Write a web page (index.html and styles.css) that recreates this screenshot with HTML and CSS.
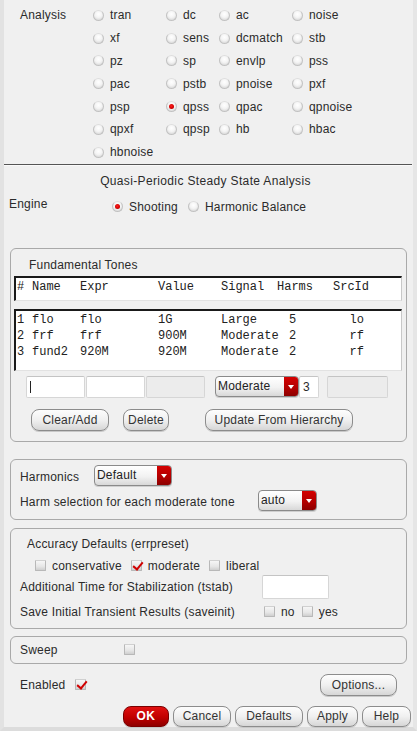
FILE: index.html
```html
<!DOCTYPE html>
<html>
<head>
<meta charset="utf-8">
<link rel="stylesheet" href="styles.css">
</head>
<body>
<div class="win">
  <div class="analysis">
    <div class="alabel">Analysis</div>
    <div class="agrid">
      <span class="opt"><i class="rb"></i>tran</span>
      <span class="opt"><i class="rb"></i>dc</span>
      <span class="opt"><i class="rb"></i>ac</span>
      <span class="opt"><i class="rb"></i>noise</span>
      <span class="opt"><i class="rb"></i>xf</span>
      <span class="opt"><i class="rb"></i>sens</span>
      <span class="opt"><i class="rb"></i>dcmatch</span>
      <span class="opt"><i class="rb"></i>stb</span>
      <span class="opt"><i class="rb"></i>pz</span>
      <span class="opt"><i class="rb"></i>sp</span>
      <span class="opt"><i class="rb"></i>envlp</span>
      <span class="opt"><i class="rb"></i>pss</span>
      <span class="opt"><i class="rb"></i>pac</span>
      <span class="opt"><i class="rb"></i>pstb</span>
      <span class="opt"><i class="rb"></i>pnoise</span>
      <span class="opt"><i class="rb"></i>pxf</span>
      <span class="opt"><i class="rb"></i>psp</span>
      <span class="opt"><i class="rb on"></i>qpss</span>
      <span class="opt"><i class="rb"></i>qpac</span>
      <span class="opt"><i class="rb"></i>qpnoise</span>
      <span class="opt"><i class="rb"></i>qpxf</span>
      <span class="opt"><i class="rb"></i>qpsp</span>
      <span class="opt"><i class="rb"></i>hb</span>
      <span class="opt"><i class="rb"></i>hbac</span>
      <span class="opt"><i class="rb"></i>hbnoise</span>
    </div>
  </div>
  <div class="sep"></div>
  <div class="title">Quasi-Periodic Steady State Analysis</div>
  <div class="engine">
    <span class="elabel">Engine</span>
    <span class="opt"><i class="rb on"></i>Shooting</span>
    <span class="opt"><i class="rb"></i>Harmonic Balance</span>
  </div>

  <div class="group tones">
    <div class="gtitle">Fundamental Tones</div>
    <div class="tbox thead">
      <div class="trow"><span>#</span><span>Name</span><span>Expr</span><span>Value</span><span>Signal</span><span>Harms</span><span>SrcId</span></div>
    </div>
    <div class="tbox tbody">
      <div class="trow"><span>1</span><span>flo</span><span>flo</span><span>1G</span><span>Large</span><span class="h">5</span><span class="s">lo</span></div>
      <div class="trow"><span>2</span><span>frf</span><span>frf</span><span>900M</span><span>Moderate</span><span class="h">2</span><span class="s">rf</span></div>
      <div class="trow"><span>3</span><span>fund2</span><span>920M</span><span>920M</span><span>Moderate</span><span class="h">2</span><span class="s">rf</span></div>
    </div>
    <div class="inrow">
      <span class="field w59 caret"></span>
      <span class="field w59"></span>
      <span class="field w59 dis"></span>
      <span class="combo c84"><span class="cv">Moderate</span><span class="arr"></span></span>
      <span class="field w20 num">3</span>
      <span class="field w61 dis gap8"></span>
    </div>
    <div class="btnrow">
      <span class="btn b78">Clear/Add</span>
      <span class="btn b46">Delete</span>
      <span class="btn b148">Update From Hierarchy</span>
    </div>
  </div>

  <div class="group harm">
    <div class="hrow">
      <span class="hl1">Harmonics</span>
      <span class="combo c78"><span class="cv">Default</span><span class="arr"></span></span>
    </div>
    <div class="hrow r2">
      <span class="hl2">Harm selection for each moderate tone</span>
      <span class="combo c59"><span class="cv">auto</span><span class="arr"></span></span>
    </div>
  </div>

  <div class="group acc">
    <div class="atitle">Accuracy Defaults (errpreset)</div>
    <div class="cbrow">
      <span class="opt"><i class="cb"></i>conservative</span>
      <span class="opt"><i class="cb on"></i>moderate</span>
      <span class="opt"><i class="cb"></i>liberal</span>
    </div>
    <div class="tsrow">
      <span class="tsl">Additional Time for Stabilization (tstab)</span>
      <span class="field w67"></span>
    </div>
    <div class="svrow">
      <span class="svl">Save Initial Transient Results (saveinit)</span>
      <span class="opt"><i class="cb"></i>no</span>
      <span class="opt"><i class="cb"></i>yes</span>
    </div>
  </div>

  <div class="group sweep">
    <span class="swl">Sweep</span>
    <i class="cb"></i>
  </div>

  <div class="enrow">
    <span class="enl">Enabled</span>
    <i class="cb on"></i>
    <span class="btn b77 right">Options...</span>
  </div>

  <div class="footer">
    <span class="btn ok">OK</span>
    <span class="btn f58">Cancel</span>
    <span class="btn f68">Defaults</span>
    <span class="btn f51">Apply</span>
    <span class="btn f49">Help</span>
  </div>
</div>
</body>
</html>
```

FILE: styles.css
```css
* { box-sizing: border-box; }
html, body { margin: 0; padding: 0; }
body {
  background: #efefef;
  font-family: "Liberation Sans", Arial, sans-serif;
  font-size: 12px;
  letter-spacing: 0.2px;
  color: #2b2b2b;
  width: 417px;
  height: 731px;
  overflow: hidden;
}
.win {
  height: 731px;
  border-left: 4px solid #e2e2e2;
  border-right: 4px solid #e6e6e6;
  border-bottom: 4px solid #dcdcdc;
  background: #f0f0f0;
}
.analysis { display: flex; padding-top: 4px; }
.alabel { width: 89px; padding-left: 16px; line-height: 22.8px; }
.agrid {
  display: grid;
  grid-template-columns: 73px 53px 73px 80px;
  grid-auto-rows: 22.8px;
}
.opt { display: inline-flex; align-items: center; white-space: nowrap; }
.rb {
  display: inline-block;
  width: 11px; height: 11px;
  border-radius: 50%;
  margin-right: 6px;
  background: radial-gradient(circle at 50% 35%, #ffffff 0%, #f4f4f4 45%, #cfcfcf 100%);
  border: 1px solid #c2c2c2;
  border-top-color: #dedede;
  position: relative;
  flex: none;
}
.rb.on::after {
  content: "";
  position: absolute;
  left: 2px; top: 2px;
  width: 5px; height: 5px;
  border-radius: 50%;
  background: radial-gradient(circle at 45% 40%, #ff2020 0%, #d00000 60%, #8a0000 100%);
}
.sep { height: 2px; border-top: 1px solid #555; border-bottom: 1px solid #fafafa; margin-right: 1px; }
.title { text-align: center; margin-top: 8px; line-height: 14px; letter-spacing: 0.35px; padding-right: 6px; }
.engine { display: flex; align-items: center; height: 22px; margin-top: 8px; padding-left: 5px; }
.elabel { width: 103px; position: relative; top: -3px; }
.engine .opt { margin-right: 10px; }

.group {
  margin: 0 6px 0 6px;
  border: 1px solid #a9a9a9;
  border-radius: 6px;
}
.tones { margin-top: 30px; height: 194px; padding: 9px 4px 0 3px; }
.gtitle { padding-left: 15px; line-height: 14px; }
.tbox {
  background: #fff;
  border-top: 2px solid #1a1a1a;
  border-left: 2px solid #1a1a1a;
  border-right: 1px solid #c8c8c8;
  border-bottom: 1px solid #e2e2e2;
  font-family: "Liberation Mono", "Courier New", monospace;
  font-size: 12px;
  letter-spacing: 0;
  color: #222;
}
.thead { margin-top: 4px; height: 25px; padding-top: 1px; }
.tbody { margin-top: 8px; height: 62px; padding-top: 1px; }
.trow {
  display: grid;
  grid-template-columns: 15px 48px 78px 63px 56px 56px 31px;
  padding-left: 1px;
  line-height: 16px;
  white-space: nowrap;
}
.trow .h { padding-left: 12px; }
.trow .s { text-align: right; }
.inrow { display: flex; align-items: center; margin-top: 4px; padding-left: 12px; height: 24px; }
.field {
  display: inline-block;
  height: 22px;
  background: #fff;
  border: 1px solid #d6d6d6;
  border-top-color: #c4c4c4;
  border-radius: 2px;
  line-height: 20px;
  padding-left: 3px;
}
.field.dis { background: #ececec; }
.w59 { width: 59px; margin-right: 1px; }
.w59.dis { margin-right: 10px; }
.w20 { width: 20px; }
.w61 { width: 61px; }
.w67 { width: 67px; height: 24px; }
.gap8 { margin-left: 8px; }
.caret::before { content: ""; display: inline-block; width: 1px; height: 12px; background: #222; vertical-align: middle; }
.num { padding-left: 3px; }
.combo {
  display: inline-flex;
  height: 21px;
  border: 1px solid #8a8a8a;
  border-radius: 4px;
  overflow: hidden;
  background: linear-gradient(#ffffff, #f2f2f2 55%, #d8d8d8);
  box-shadow: 0 1px 0 #cfcfcf;
}
.combo .cv { flex: 1; padding-left: 2px; line-height: 19px; color: #222; }
.combo .arr {
  width: 14px;
  background: linear-gradient(#d40000, #b00000 60%, #8c0000);
  position: relative;
}
.combo .arr::after {
  content: "";
  position: absolute;
  left: 4px; top: 8px;
  border-left: 3px solid transparent;
  border-right: 3px solid transparent;
  border-top: 4px solid #fff;
}
.c84 { width: 84px; }
.c78 { width: 78px; }
.c59 { width: 59px; }
.btnrow { display: flex; margin-top: 10px; padding-left: 17px; height: 22px; }
.btn {
  display: inline-flex;
  align-items: center;
  justify-content: center;
  height: 22px;
  border: 1px solid #8c8c8c;
  border-radius: 8px;
  background: linear-gradient(#fdfdfd, #f0f0f0 50%, #d6d6d6);
  box-shadow: 0 1px 0 #c8c8c8;
  color: #333;
  white-space: nowrap;
}
.b78 { width: 78px; margin-right: 14px; }
.b46 { width: 46px; margin-right: 36px; }
.b148 { width: 148px; }
.b77 { width: 77px; }

.harm { margin-top: 17px; height: 61px; padding: 5px 0 0 9px; }
.hrow { display: flex; align-items: center; height: 21px; }
.hl1 { width: 74px; position: relative; top: 2px; }
.r2 { margin-top: 4px; }
.hl2 { width: 238px; position: relative; top: 2px; }

.acc { margin-top: 8px; height: 101px; padding: 8px 0 0 9px; }
.atitle { padding-left: 7px; line-height: 14px; }
.cbrow { display: flex; align-items: center; margin-top: 8px; padding-left: 15px; height: 14px; }
.cbrow .opt { margin-right: 9px; }
.cb {
  display: inline-block;
  width: 11px; height: 11px;
  margin-right: 6px;
  border: 1px solid #b8b8b8;
  border-top-color: #d0d0d0;
  border-radius: 1px;
  background: linear-gradient(#f6f6f6, #e6e6e6 60%, #cfcfcf);
  position: relative;
  flex: none;
}
.cb.on::after {
  content: "";
  position: absolute;
  left: 3px; top: -1px;
  width: 4px; height: 8px;
  border-right: 2px solid #d00000;
  border-bottom: 2px solid #d00000;
  transform: rotate(40deg);
}
.tsrow { display: flex; align-items: center; margin-top: 1px; height: 26px; }
.tsl { width: 242px; }
.svrow { display: flex; align-items: center; margin-top: 4px; height: 16px; }
.svl { width: 244px; }
.svrow .opt { margin-right: 7px; }

.sweep { margin-top: 7px; height: 28px; display: flex; align-items: center; padding-left: 9px; }
.swl { width: 104px; }
.enrow { display: flex; align-items: center; height: 22px; margin-top: 10px; padding-left: 16px; padding-right: 16px; }
.enl { width: 55px; }
.right { margin-left: auto; }
.footer { display: flex; justify-content: flex-end; gap: 4px; margin-top: 10px; padding-right: 2px; }
.footer .btn { height: 21px; }
.ok {
  width: 46px;
  background: linear-gradient(#e01010, #c00000 55%, #8e0000);
  border-color: #7a0000;
  color: #fff;
  font-weight: bold;
  letter-spacing: 0.5px;
}
.f58 { width: 58px; }
.f68 { width: 68px; }
.f51 { width: 51px; }
.f49 { width: 49px; }
```
